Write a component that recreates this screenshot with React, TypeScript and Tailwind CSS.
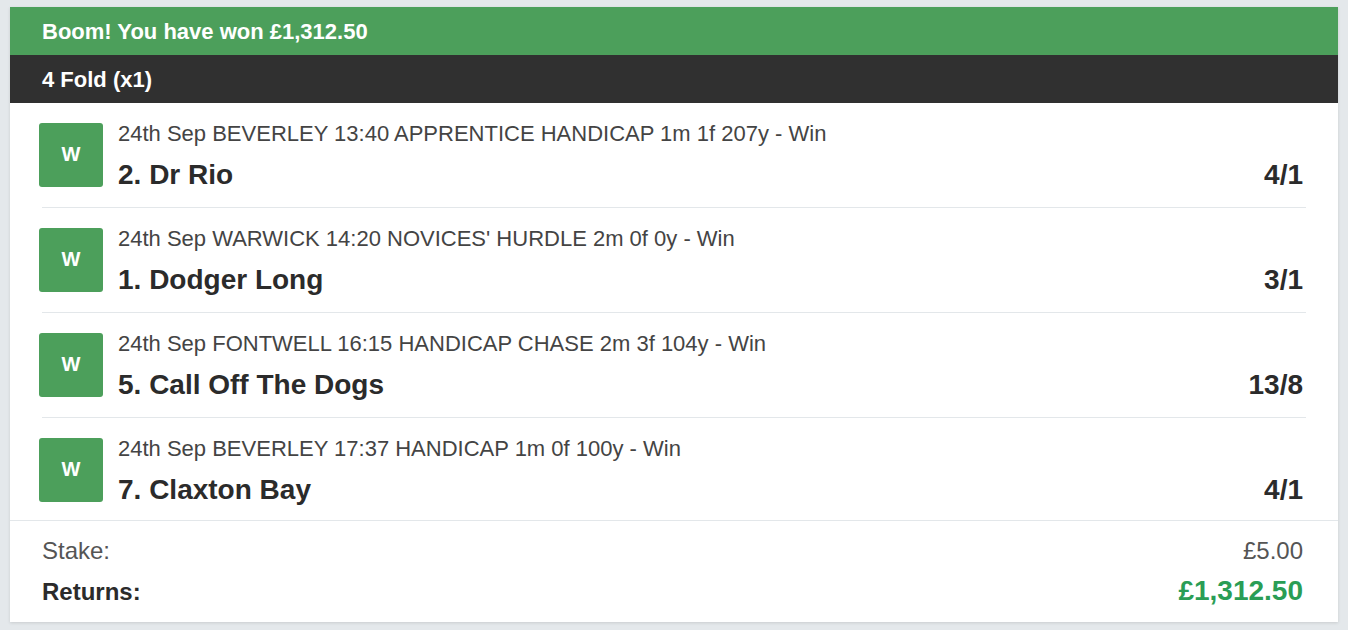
import React from "react";

interface Leg {
  meta: string;
  name: string;
  odds: string;
}

const legs: Leg[] = [
  {
    meta: "24th Sep BEVERLEY 13:40 APPRENTICE HANDICAP 1m 1f 207y - Win",
    name: "2. Dr Rio",
    odds: "4/1",
  },
  {
    meta: "24th Sep WARWICK 14:20 NOVICES' HURDLE 2m 0f 0y - Win",
    name: "1. Dodger Long",
    odds: "3/1",
  },
  {
    meta: "24th Sep FONTWELL 16:15 HANDICAP CHASE 2m 3f 104y - Win",
    name: "5. Call Off The Dogs",
    odds: "13/8",
  },
  {
    meta: "24th Sep BEVERLEY 17:37 HANDICAP 1m 0f 100y - Win",
    name: "7. Claxton Bay",
    odds: "4/1",
  },
];

function LegRow({ leg, last }: { leg: Leg; last: boolean }) {
  return (
    <div
      className={`mx-8 flex pt-5 ${
        last ? "pb-4" : "pb-[18px] border-b border-[#e3e7ea]"
      }`}
    >
      <div className="-ml-[3px] flex h-16 w-16 shrink-0 items-center justify-center rounded-[3px] bg-[#4c9f5b] pb-[2px] text-[20px] font-bold text-white">
        W
      </div>
      <div className="ml-[15px] flex min-w-0 flex-1 flex-col">
        <div className="text-[22px] leading-[22px] text-[#444444]">
          {leg.meta}
        </div>
        <div className="mt-4 mr-[3px] flex items-baseline justify-between text-[28px] font-bold leading-7 text-[#2b2b2b]">
          <span>{leg.name}</span>
          <span>{leg.odds}</span>
        </div>
      </div>
    </div>
  );
}

export default function App() {
  return (
    <div
      className="min-h-[630px] w-full bg-[#e4e8eb] px-[10px] pt-[7px] pb-[9px]"
      style={{ fontFamily: '"Liberation Sans", Arial, sans-serif' }}
    >
      <div className="bg-white shadow-[0_1px_3px_rgba(0,0,0,0.12)]">
        <div className="flex h-12 items-center bg-[#4c9f5b] px-8 text-[22px] font-bold text-white">
          Boom! You have won £1,312.50
        </div>
        <div className="flex h-12 items-center bg-[#303030] px-8 text-[22px] font-bold text-white">
          4 Fold (x1)
        </div>

        {legs.map((leg, i) => (
          <LegRow key={i} leg={leg} last={i === legs.length - 1} />
        ))}

        <div className="border-t border-[#e3e7ea] px-8 pt-4 pb-[14px]">
          <div className="mr-[3px] flex items-baseline justify-between text-[24px] leading-7 text-[#555555]">
            <span>Stake:</span>
            <span>£5.00</span>
          </div>
          <div className="mt-[10px] mr-[3px] flex items-baseline justify-between leading-8">
            <span className="text-[24px] font-bold text-[#2b2b2b]">
              Returns:
            </span>
            <span className="text-[28px] font-bold text-[#2a9d55]">
              £1,312.50
            </span>
          </div>
        </div>
      </div>
    </div>
  );
}
